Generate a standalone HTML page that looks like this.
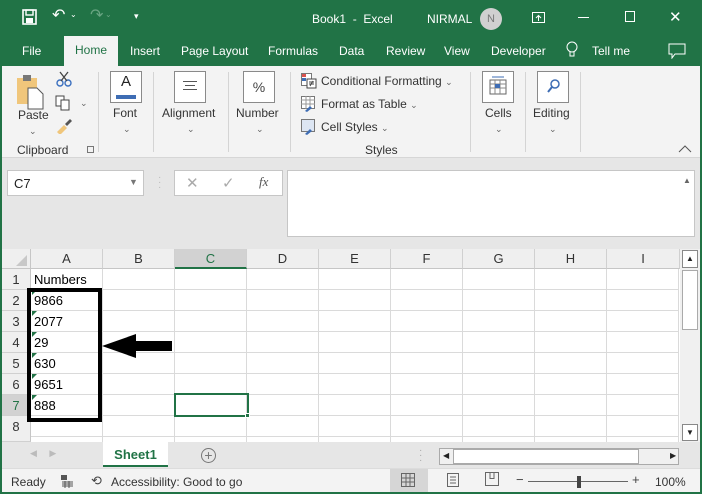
<!DOCTYPE html>
<html><head><style>
*{box-sizing:border-box;margin:0;padding:0}
body{width:702px;height:494px;overflow:hidden;font-family:"Liberation Sans",sans-serif;background:#217346;position:relative;font-size:12px;color:#222}
.a{position:absolute}
.t{color:#fff;font-size:12px;position:absolute}
.sep{position:absolute;top:72px;width:1px;height:80px;background:#d4d4d4}
.big{position:absolute;width:32px;height:32px;border:1px solid #8a8a8a;background:#fff}
.lbl{position:absolute;font-size:12px;color:#333}
.car{position:absolute;font-size:9px;color:#666}
.col{position:absolute;top:249px;height:20px;border-right:1px solid #d0d0d0;border-bottom:1px solid #c6c6c6;text-align:center;line-height:20px;font-size:13px;background:#efefef;color:#333}
.row{position:absolute;left:2px;width:29px;height:21px;text-align:center;line-height:21px;font-size:13px;border-bottom:1px solid #d0d0d0;border-right:1px solid #c6c6c6;background:#efefef;color:#333}
.cell{position:absolute;font-size:13px;left:34px;line-height:21px;color:#000}
.tri{position:absolute;left:32px;width:0;height:0;border-top:5px solid #217346;border-right:5px solid transparent}
.vl{position:absolute;top:269px;height:173px;width:1px;background:#dadada}
.hl{position:absolute;left:31px;width:648px;height:1px;background:#dadada}
</style></head><body>
<!-- title bar -->
<svg class="a" style="left:22px;top:9px" width="16" height="16"><rect x="1" y="1" width="13" height="14" fill="none" stroke="#fff" stroke-width="1.6"/><rect x="4" y="1" width="7" height="5" fill="none" stroke="#fff" stroke-width="1.4"/><rect x="4" y="9" width="7" height="5" fill="#fff"/></svg>
<div class="t" style="left:52px;top:5px;font-size:16px">↶</div><div class="t" style="left:70px;top:10px;font-size:8px">⌄</div>
<div class="t" style="left:90px;top:5px;font-size:16px;color:#6aa583">↷</div><div class="t" style="left:105px;top:10px;font-size:8px;color:#6aa583">⌄</div>
<div class="t" style="left:134px;top:11px;font-size:9px">▾</div>
<div class="t" style="left:312px;top:12px">Book1 &nbsp;- &nbsp;Excel</div>
<div class="t" style="left:427px;top:12px">NIRMAL</div>
<div class="a" style="left:480px;top:8px;width:22px;height:22px;border-radius:50%;background:#d0d0d0;color:#777;text-align:center;line-height:22px;font-size:11px">N</div>
<svg class="a" style="left:532px;top:12px" width="13" height="12"><rect x="0.5" y="0.5" width="12" height="10" fill="none" stroke="#fff"/><path d="M6.5 9V4M4 6l2.5-2.5L9 6" stroke="#fff" fill="none"/></svg>
<div class="a" style="left:578px;top:17px;width:11px;height:1px;background:#fff"></div>
<div class="a" style="left:625px;top:11px;width:10px;height:11px;border:1px solid #fff"></div>
<div class="t" style="left:669px;top:8px;font-size:15px">✕</div>
<!-- tabs -->
<div class="t" style="left:22px;top:44px">File</div>
<div class="a" style="left:64px;top:36px;width:54px;height:31px;background:#f3f3f3;color:#217346;text-align:center;line-height:29px;font-size:12px">Home</div>
<div class="t" style="left:130px;top:44px">Insert</div>
<div class="t" style="left:181px;top:44px">Page Layout</div>
<div class="t" style="left:268px;top:44px">Formulas</div>
<div class="t" style="left:339px;top:44px">Data</div>
<div class="t" style="left:386px;top:44px">Review</div>
<div class="t" style="left:444px;top:44px">View</div>
<div class="t" style="left:491px;top:44px">Developer</div>
<svg class="a" style="left:566px;top:41px" width="12" height="18"><circle cx="6" cy="6" r="5" fill="none" stroke="#fff"/><path d="M4 11v4h4v-4" fill="none" stroke="#fff"/></svg>
<div class="t" style="left:592px;top:44px">Tell me</div>
<svg class="a" style="left:668px;top:43px" width="18" height="16"><path d="M1 1h16v10H7l-3 4v-4H1z" fill="none" stroke="#fff"/></svg>

<!-- ribbon -->
<div class="a" style="left:2px;top:66px;width:698px;height:92px;background:#f3f3f3;border-bottom:1px solid #d6d6d6"></div>
<svg class="a" style="left:14px;top:74px" width="36" height="36"><rect x="3" y="4" width="20" height="26" fill="#f0c67b"/><rect x="9" y="1" width="8" height="6" fill="#777"/><path d="M14 14h9l6 6v15H14z" fill="#fff" stroke="#555"/></svg>
<svg class="a" style="left:56px;top:71px" width="16" height="16"><circle cx="4" cy="12" r="3" fill="none" stroke="#3a6fbf" stroke-width="1.4"/><circle cx="12" cy="12" r="3" fill="none" stroke="#3a6fbf" stroke-width="1.4"/><path d="M5 10L12 1M11 10L4 1" stroke="#444" stroke-width="1.3"/></svg>
<svg class="a" style="left:55px;top:95px" width="16" height="16"><rect x="1" y="1" width="8" height="10" fill="#fff" stroke="#444"/><rect x="6" y="5" width="8" height="10" fill="#fff" stroke="#444"/></svg>
<div class="car" style="left:80px;top:98px">⌄</div>
<svg class="a" style="left:55px;top:118px" width="18" height="16"><path d="M2 14l7-7 3 3-7 7z" fill="#f0c67b"/><path d="M10 6l5-5 2 2-5 5z" fill="#555"/></svg>
<div class="lbl" style="left:18px;top:108px">Paste</div>
<div class="car" style="left:29px;top:126px">⌄</div>
<div class="lbl" style="left:17px;top:143px">Clipboard</div>
<div class="a" style="left:87px;top:146px;width:7px;height:7px;border:1px solid #777"></div>
<div class="sep" style="left:98px"></div>
<div class="big" style="left:110px;top:71px;text-align:center"><div style="font-size:15px;margin-top:1px">A</div><div style="position:absolute;left:5px;top:23px;width:20px;height:4px;background:#3e6db4"></div></div>
<div class="lbl" style="left:113px;top:106px">Font</div><div class="car" style="left:123px;top:124px">⌄</div>
<div class="sep" style="left:153px"></div>
<div class="big" style="left:174px;top:71px"><div style="position:absolute;left:8px;top:9px;width:14px;border-top:1px solid #555;height:9px;border-bottom:1px solid #555"></div><div style="position:absolute;left:10px;top:13px;width:10px;border-top:1px solid #555"></div></div>
<div class="lbl" style="left:162px;top:106px">Alignment</div><div class="car" style="left:187px;top:124px">⌄</div>
<div class="sep" style="left:228px"></div>
<div class="big" style="left:243px;top:71px;text-align:center;line-height:30px;font-size:14px;color:#444">%</div>
<div class="lbl" style="left:236px;top:106px">Number</div><div class="car" style="left:256px;top:124px">⌄</div>
<div class="sep" style="left:290px"></div>
<svg class="a" style="left:301px;top:73px" width="16" height="16"><rect x="0.5" y="0.5" width="10" height="12" fill="#fff" stroke="#777"/><rect x="1" y="1" width="4" height="3" fill="#d9534f"/><rect x="1" y="5" width="4" height="3" fill="#3e6db4"/><rect x="6" y="6" width="9" height="9" fill="#fff" stroke="#444"/><path d="M8 9h5M8 11h5M12 8l-3 5" stroke="#444"/></svg>
<div class="lbl" style="left:321px;top:74px">Conditional Formatting <span style="font-size:9px;color:#666">⌄</span></div>
<svg class="a" style="left:301px;top:96px" width="16" height="16"><rect x="0.5" y="0.5" width="13" height="12" fill="#fff" stroke="#777"/><path d="M0 4h14M0 8h14M5 0v13M9 0v13" stroke="#999"/><path d="M4 15l5-5 2 2-5 4z" fill="#3e6db4"/></svg>
<div class="lbl" style="left:321px;top:97px">Format as Table <span style="font-size:9px;color:#666">⌄</span></div>
<svg class="a" style="left:301px;top:119px" width="16" height="16"><rect x="0.5" y="0.5" width="13" height="12" fill="#dde6f3" stroke="#777"/><path d="M4 15l5-5 2 2-5 4z" fill="#3e6db4"/></svg>
<div class="lbl" style="left:321px;top:120px">Cell Styles <span style="font-size:9px;color:#666">⌄</span></div>
<div class="lbl" style="left:365px;top:143px">Styles</div>
<div class="sep" style="left:470px"></div>
<div class="big" style="left:482px;top:71px"><svg width="30" height="30"><rect x="7" y="8" width="16" height="14" fill="none" stroke="#666"/><path d="M7 12h16M7 16h16M12 8v14M17 8v14" stroke="#888"/><rect x="12" y="12" width="5" height="4" fill="#3e6db4"/><path d="M9 5h12" stroke="#3e6db4"/></svg></div>
<div class="lbl" style="left:485px;top:106px">Cells</div><div class="car" style="left:495px;top:124px">⌄</div>
<div class="sep" style="left:525px"></div>
<div class="big" style="left:537px;top:71px"><svg width="30" height="30"><circle cx="17" cy="12" r="4" fill="none" stroke="#3e6db4" stroke-width="1.5"/><path d="M14 15l-4 5" stroke="#3e6db4" stroke-width="2"/></svg></div>
<div class="lbl" style="left:533px;top:106px">Editing</div><div class="car" style="left:549px;top:124px">⌄</div>
<div class="sep" style="left:580px"></div>
<svg class="a" style="left:678px;top:144px" width="14" height="9"><path d="M1 8l6-6 6 6" fill="none" stroke="#555"/></svg>

<!-- formula area -->
<div class="a" style="left:2px;top:158px;width:698px;height:91px;background:#e6e6e6"></div>
<div class="a" style="left:7px;top:170px;width:137px;height:26px;background:#fff;border:1px solid #c6c6c6"></div>
<div class="a" style="left:14px;top:176px;font-size:13px">C7</div>
<div class="a" style="left:129px;top:177px;font-size:9px;color:#777">▼</div>
<div class="a" style="left:158px;top:175px;color:#bbb;font-size:10px;line-height:5px">·<br>·<br>·</div>
<div class="a" style="left:174px;top:170px;width:109px;height:26px;background:#fff;border:1px solid #c6c6c6"></div>
<div class="a" style="left:186px;top:174px;color:#aaa;font-size:15px">✕</div>
<div class="a" style="left:222px;top:174px;color:#aaa;font-size:15px">✓</div>
<div class="a" style="left:259px;top:174px;color:#555;font-size:13px;font-style:italic;font-family:'Liberation Serif',serif">fx</div>
<div class="a" style="left:287px;top:170px;width:408px;height:67px;background:#fff;border:1px solid #c6c6c6"></div>
<div class="a" style="left:683px;top:176px;font-size:8px;color:#666">▲</div>

<!-- grid -->
<div class="a" style="left:2px;top:249px;width:678px;height:193px;background:#fff"></div>
<div class="a" style="left:2px;top:249px;width:29px;height:20px;background:#efefef;border-right:1px solid #c6c6c6;border-bottom:1px solid #c6c6c6"></div>
<svg class="a" style="left:16px;top:255px" width="12" height="12"><path d="M11 0v11H0z" fill="#c8c8c8"/></svg>
<div class="col" style="left:31px;width:72px">A</div>
<div class="col" style="left:103px;width:72px">B</div>
<div class="col" style="left:175px;width:72px;background:#d2d2d2;border-bottom:2px solid #217346;color:#217346">C</div>
<div class="col" style="left:247px;width:72px">D</div>
<div class="col" style="left:319px;width:72px">E</div>
<div class="col" style="left:391px;width:72px">F</div>
<div class="col" style="left:463px;width:72px">G</div>
<div class="col" style="left:535px;width:72px">H</div>
<div class="col" style="left:607px;width:73px">I</div>
<div class="row" style="top:269px">1</div>
<div class="row" style="top:290px">2</div>
<div class="row" style="top:311px">3</div>
<div class="row" style="top:332px">4</div>
<div class="row" style="top:353px">5</div>
<div class="row" style="top:374px">6</div>
<div class="row" style="top:395px;background:#d2d2d2;color:#217346">7</div>
<div class="row" style="top:416px;height:26px">8</div>
<div class="vl" style="left:102px"></div><div class="vl" style="left:174px"></div><div class="vl" style="left:246px"></div><div class="vl" style="left:318px"></div><div class="vl" style="left:390px"></div><div class="vl" style="left:462px"></div><div class="vl" style="left:534px"></div><div class="vl" style="left:606px"></div><div class="vl" style="left:678px"></div>
<div class="hl" style="top:289px"></div><div class="hl" style="top:310px"></div><div class="hl" style="top:331px"></div><div class="hl" style="top:352px"></div><div class="hl" style="top:373px"></div><div class="hl" style="top:394px"></div><div class="hl" style="top:415px"></div><div class="hl" style="top:436px"></div>
<div class="cell" style="top:269px">Numbers</div>
<div class="cell" style="top:290px">9866</div><div class="tri" style="top:290px"></div>
<div class="cell" style="top:311px">2077</div><div class="tri" style="top:311px"></div>
<div class="cell" style="top:332px">29</div><div class="tri" style="top:332px"></div>
<div class="cell" style="top:353px">630</div><div class="tri" style="top:353px"></div>
<div class="cell" style="top:374px">9651</div><div class="tri" style="top:374px"></div>
<div class="cell" style="top:395px">888</div><div class="tri" style="top:395px"></div>
<div class="a" style="left:27px;top:288px;width:75px;height:134px;border:4px solid #000"></div>
<svg class="a" style="left:100px;top:331px" width="74" height="30"><path d="M2 15L36 3v7h36v10H36v7z" fill="#000"/></svg>
<div class="a" style="left:174px;top:393px;width:75px;height:24px;border:2px solid #217346"></div>
<div class="a" style="left:245px;top:413px;width:5px;height:5px;background:#217346;border:1px solid #fff"></div>
<!-- vertical scrollbar -->
<div class="a" style="left:680px;top:249px;width:20px;height:193px;background:#f0f0f0"></div>
<div class="a" style="left:682px;top:250px;width:16px;height:18px;background:#fff;border:1px solid #888;font-size:8px;text-align:center;line-height:16px">▲</div>
<div class="a" style="left:682px;top:270px;width:16px;height:60px;background:#fff;border:1px solid #aaa"></div>
<div class="a" style="left:682px;top:424px;width:16px;height:17px;background:#fff;border:1px solid #888;font-size:8px;text-align:center;line-height:15px">▼</div>
<!-- sheet bar -->
<div class="a" style="left:2px;top:442px;width:698px;height:26px;background:#e6e6e6"></div>
<div class="a" style="left:30px;top:448px;font-size:9px;color:#bbb">◀ &nbsp; &nbsp; ▶</div>
<div class="a" style="left:103px;top:442px;width:65px;height:25px;background:#fff;border-bottom:2px solid #217346;color:#217346;font-weight:bold;text-align:center;line-height:26px;font-size:13px">Sheet1</div>
<div class="a" style="left:201px;top:448px;width:15px;height:15px;border:1px solid #777;border-radius:50%;text-align:center;line-height:12px;color:#777;font-size:14px">+</div>
<div class="a" style="left:419px;top:448px;color:#aaa;font-size:10px;line-height:5px">·<br>·<br>·</div>
<div class="a" style="left:439px;top:448px;width:240px;height:17px;background:#f0f0f0;border:1px solid #aaa"></div>
<div class="a" style="left:453px;top:449px;width:186px;height:15px;background:#fff;border:1px solid #aaa"></div>
<div class="a" style="left:443px;top:451px;font-size:8px">◀</div>
<div class="a" style="left:670px;top:451px;font-size:8px">▶</div>
<!-- status bar -->
<div class="a" style="left:2px;top:468px;width:698px;height:24px;background:#f3f3f3;border-top:1px solid #dcdcdc"></div>
<div class="a" style="left:11px;top:475px;font-size:12px;color:#333">Ready</div>
<svg class="a" style="left:60px;top:474px" width="14" height="14"><rect x="1" y="1" width="6" height="5" fill="#555"/><path d="M2 8h11M2 10h11M2 12h11M5 7v7M9 7v7" stroke="#555"/></svg>
<div class="a" style="left:91px;top:473px;font-size:13px;color:#444">⟲</div>
<div class="a" style="left:111px;top:475px;font-size:12px;color:#333">Accessibility: Good to go</div>
<div class="a" style="left:390px;top:469px;width:38px;height:23px;background:#d6d6d6"></div>
<svg class="a" style="left:401px;top:473px" width="14" height="14"><rect x="0.5" y="0.5" width="13" height="13" fill="none" stroke="#666"/><path d="M0 5h14M0 9h14M5 0v14M9 0v14" stroke="#666"/></svg>
<svg class="a" style="left:447px;top:473px" width="12" height="14"><rect x="0.5" y="0.5" width="11" height="13" fill="none" stroke="#666"/><path d="M3 4h6M3 7h6M3 10h6" stroke="#666"/></svg>
<svg class="a" style="left:485px;top:472px" width="14" height="14"><path d="M0.5 0.5h13v13h-13zM5 0.5v6h4v-6" fill="none" stroke="#666"/></svg>
<div class="a" style="left:516px;top:472px;font-size:13px;color:#444">−</div>
<div class="a" style="left:528px;top:481px;width:100px;height:1px;background:#666"></div>
<div class="a" style="left:577px;top:476px;width:4px;height:12px;background:#444"></div>
<div class="a" style="left:632px;top:472px;font-size:13px;color:#444">+</div>
<div class="a" style="left:655px;top:475px;font-size:12px;color:#333">100%</div>
</body></html>
